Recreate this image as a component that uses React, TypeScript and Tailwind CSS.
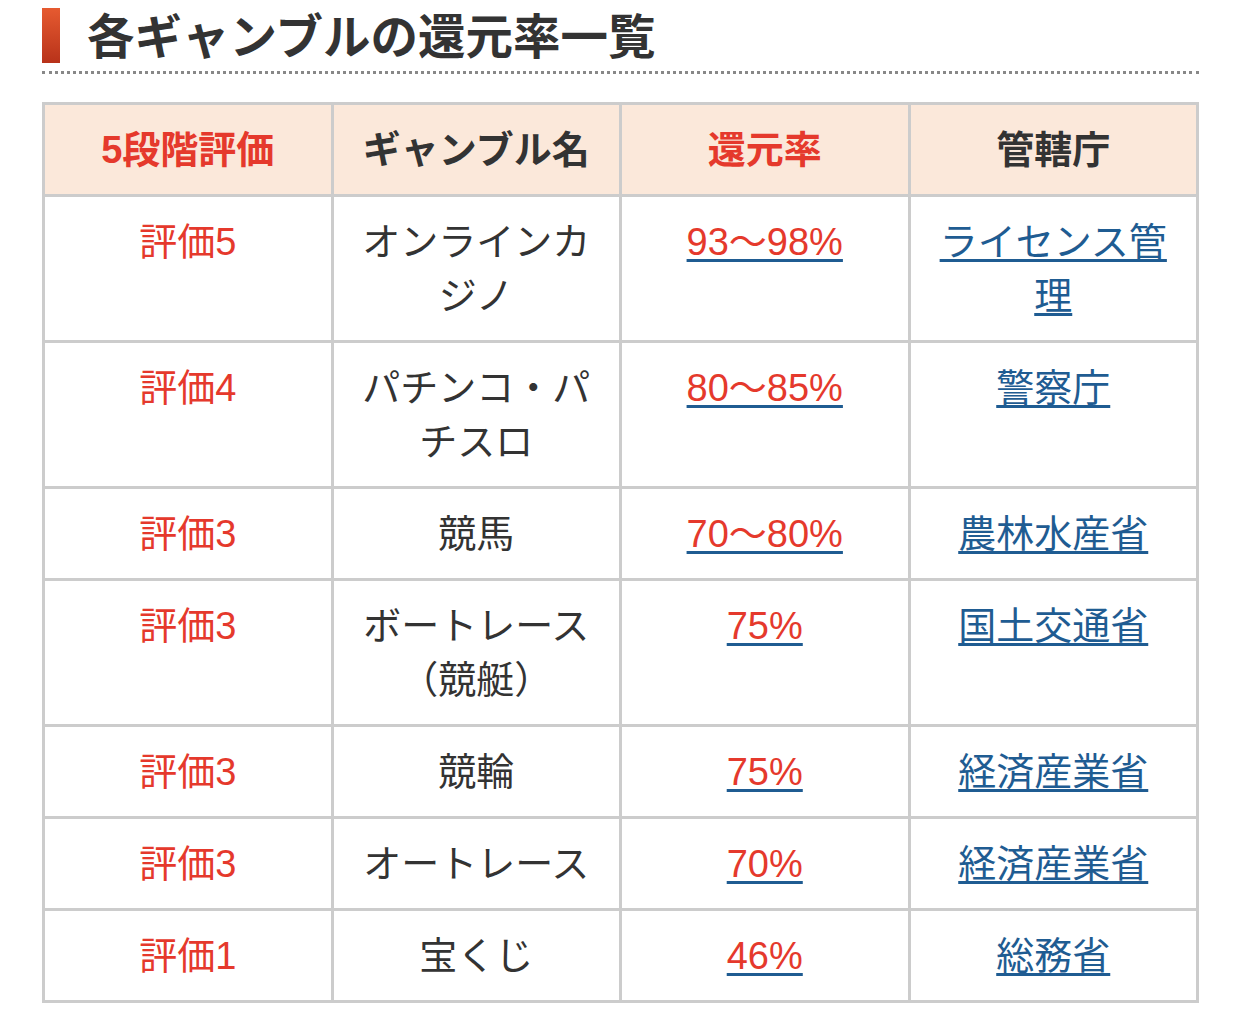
import React from "react";

const rows = [
  { grade: "評価5", name: "オンラインカジノ", rate: "93〜98%", agency: "ライセンス管理" },
  { grade: "評価4", name: "パチンコ・パチスロ", rate: "80〜85%", agency: "警察庁" },
  { grade: "評価3", name: "競馬", rate: "70〜80%", agency: "農林水産省" },
  { grade: "評価3", name: "ボートレース（競艇）", rate: "75%", agency: "国土交通省" },
  { grade: "評価3", name: "競輪", rate: "75%", agency: "経済産業省" },
  { grade: "評価3", name: "オートレース", rate: "70%", agency: "経済産業省" },
  { grade: "評価1", name: "宝くじ", rate: "46%", agency: "総務省" },
];

const font = { fontFamily: '"Liberation Sans", "Noto Sans CJK JP", sans-serif' };

export default function App() {
  return (
    <div className="bg-white w-[1242px] min-h-[1021px] text-[#333]" style={font}>
      <div className="ml-[42px] w-[1157px] pt-[8px]">
        <div className="flex items-center pb-[8px] border-b-[3px] border-dotted border-[#888]">
          <div className="w-[18px] h-[55px] bg-gradient-to-b from-[#e65a30] to-[#b8321a]" />
          <h2 className="ml-[27px] pt-[4px] text-[47.5px] font-bold leading-[51px] text-[#333]">
            各ギャンブルの還元率一覧
          </h2>
        </div>
        <table className="mt-[28px] w-full border-collapse table-fixed border-[3px] border-[#cccccc] text-[38px] leading-[54px] text-center">
          <thead>
            <tr className="bg-[#fbe8da]">
              <th className="border-[3px] border-[#cccccc] pt-[18px] pb-[17px] px-[12px] font-bold text-[#e5392c]">5段階評価</th>
              <th className="border-[3px] border-[#cccccc] pt-[18px] pb-[17px] px-[12px] font-bold text-[#333]">ギャンブル名</th>
              <th className="border-[3px] border-[#cccccc] pt-[18px] pb-[17px] px-[12px] font-bold text-[#e5392c]">還元率</th>
              <th className="border-[3px] border-[#cccccc] pt-[18px] pb-[17px] px-[12px] font-bold text-[#333]">管轄庁</th>
            </tr>
          </thead>
          <tbody>
            {rows.map((r, i) => (
              <tr key={i}>
                <td className="border-[3px] border-[#cccccc] pt-[18px] pb-[17px] px-[12px] align-top text-[#e5392c]">{r.grade}</td>
                <td className="border-[3px] border-[#cccccc] pt-[18px] pb-[17px] px-[12px] align-top text-[#333]">{r.name}</td>
                <td className="border-[3px] border-[#cccccc] pt-[18px] pb-[17px] px-[12px] align-top">
                  <a href="#" className="text-[#1f5c92] underline underline-offset-[4px]">
                    <span className="text-[#e5392c]">{r.rate}</span>
                  </a>
                </td>
                <td className="border-[3px] border-[#cccccc] pt-[18px] pb-[17px] px-[12px] align-top">
                  <a href="#" className="text-[#1f5c92] underline underline-offset-[4px]">{r.agency}</a>
                </td>
              </tr>
            ))}
          </tbody>
        </table>
      </div>
    </div>
  );
}
